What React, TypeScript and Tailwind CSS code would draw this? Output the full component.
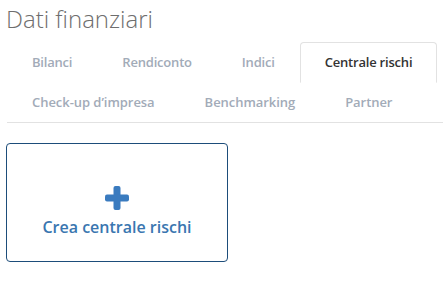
const rows = [
  [
    { label: "Bilanci" },
    { label: "Rendiconto" },
    { label: "Indici" },
    { label: "Centrale rischi", active: true },
  ],
  [
    { label: "Check-up d\u2019impresa" },
    { label: "Benchmarking" },
    { label: "Partner" },
  ],
];

export default function App() {
  return (
    <div className="w-[443px] h-[283px] overflow-hidden bg-white font-['Open_Sans',sans-serif]">
      <h1 className="pl-[6px] pt-[5px] text-[24px] font-light leading-[28px] text-[#6e6e6e]">
        Dati finanziari
      </h1>

      <div className="mt-[9px] ml-[7px] border-b border-[#e2e2e2]">
        {rows.map((row, i) => (
          <ul key={i} className={`flex ${i === 0 ? "tracking-[-0.2px]" : "tracking-[-0.05px]"}`}>
            {row.map((t) => (
              <li
                key={t.label}
                className={`-mb-px whitespace-nowrap rounded-t-[4px] border px-[24px] py-[10px] text-[13px] font-semibold leading-[19px] ${
                  t.active
                    ? "border-[#e2e2e2] border-b-transparent bg-white text-[#333]"
                    : "border-transparent text-[#a2abb8]"
                }`}
              >
                {t.label}
              </li>
            ))}
          </ul>
        ))}
      </div>

      <div className="mt-[20px] ml-[6px] flex h-[119px] w-[222px] flex-col items-center rounded-[4px] border border-[#1d4d7a] pt-[42px]">
        <svg width="24" height="24" viewBox="0 0 24 24" fill="#3a7bbf">
          <rect x="8.5" y="0" width="7" height="24" rx="2" />
          <rect x="0" y="8.5" width="24" height="7" rx="2" />
        </svg>
        <span className="mt-[6px] text-[16px] font-semibold leading-[22px] text-[#3a76b0]">
          Crea centrale rischi
        </span>
      </div>
    </div>
  );
}
